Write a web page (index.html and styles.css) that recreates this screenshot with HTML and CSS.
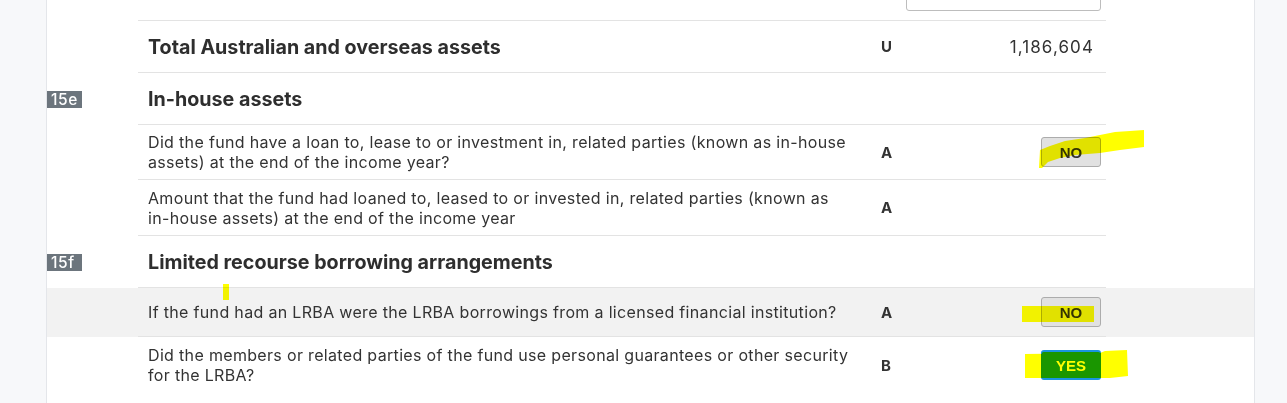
FILE: index.html
```html
<!DOCTYPE html>
<html lang="en">
<head>
<meta charset="utf-8">
<title>In-house assets</title>
<link rel="stylesheet" href="styles.css">
</head>
<body>
<div class="page">
  <aside class="side side-left"></aside>
  <main class="main">
    <div class="row row-partial">
      <div class="gutter"></div>
      <div class="cells">
        <div class="desc"></div>
        <div class="letter"></div>
        <div class="value"><div class="input-stub"></div></div>
      </div>
    </div>

    <div class="row row-heading">
      <div class="gutter"></div>
      <div class="cells">
        <div class="desc heading">Total Australian and overseas assets</div>
        <div class="letter">U</div>
        <div class="value"><span class="amount">1,186,604</span></div>
      </div>
    </div>

    <div class="row row-heading">
      <div class="gutter"><span class="badge">15e</span></div>
      <div class="cells">
        <div class="desc heading">In-house assets</div>
        <div class="letter"></div>
        <div class="value"></div>
      </div>
    </div>

    <div class="row row-question">
      <div class="gutter"></div>
      <div class="cells">
        <div class="desc">Did the fund have a loan to, lease to or investment in, related parties (known as <span class="nowrap">in-house</span> assets) at the end of the income year?</div>
        <div class="letter">A</div>
        <div class="value"><button class="toggle toggle-no">NO</button></div>
      </div>
    </div>

    <div class="row row-question row-tall">
      <div class="gutter"></div>
      <div class="cells">
        <div class="desc">Amount that the fund had loaned to, leased to or invested in, related parties (known as <span class="nowrap">in-house</span> assets) at the end of the income year</div>
        <div class="letter">A</div>
        <div class="value"></div>
      </div>
    </div>

    <div class="row row-heading">
      <div class="gutter"><span class="badge">15f</span></div>
      <div class="cells">
        <div class="desc heading">Limited recourse borrowing arrangements</div>
        <div class="letter"></div>
        <div class="value"></div>
      </div>
    </div>

    <div class="row row-single row-shaded">
      <div class="gutter"></div>
      <div class="cells">
        <div class="desc">If the fund had an LRBA were the LRBA borrowings from a licensed financial institution?</div>
        <div class="letter">A</div>
        <div class="value"><button class="toggle toggle-no">NO</button></div>
      </div>
    </div>

    <div class="row row-question row-last">
      <div class="gutter"></div>
      <div class="cells">
        <div class="desc">Did the members or related parties of the fund use personal guarantees or other security for the LRBA?</div>
        <div class="letter">B</div>
        <div class="value"><button class="toggle toggle-yes">YES</button></div>
      </div>
    </div>
  </main>
  <aside class="side side-right"></aside>

  <svg class="highlights" width="1287" height="403" viewBox="0 0 1287 403" aria-hidden="true">
    <polygon points="1039,168 1040,150 1050,146 1065,141 1085,138 1100,135 1115,132 1130,131 1144,130 1144,147 1120,150 1100,153 1075,155 1060,158 1048,162 1042,168"/>
    <rect x="223" y="284" width="6" height="16"/>
    <rect x="1022" y="306" width="72" height="16"/>
    <polygon points="1025,354 1100,353 1105,351 1127,350 1128,376 1110,378 1025,378"/>
  </svg>
</div>
</body>
</html>
```

FILE: styles.css
```css
* { box-sizing: border-box; }

html, body {
  margin: 0;
  padding: 0;
  background: #ffffff;
}

body {
  font-family: Inter, "Noto Sans", "Liberation Sans", sans-serif;
  color: #333333;
  font-size: 16px;
  overflow: hidden;
}

.page {
  position: relative;
  display: flex;
  width: 1287px;
  height: 403px;
  overflow: hidden;
}

.side {
  background: #f7f8fa;
  flex: none;
}

.side-left {
  width: 47px;
  border-right: 1px solid #e4e6ea;
}

.side-right {
  flex: 1;
  border-left: 1px solid #e4e6ea;
}

.main {
  width: 1207px;
  flex: none;
  background: #ffffff;
  display: flex;
  flex-direction: column;
}

.row {
  display: flex;
}

.row-shaded {
  background: #f2f2f2;
}

.gutter {
  width: 91px;
  flex: none;
  display: flex;
  align-items: center;
}

.badge {
  display: inline-block;
  background: #6c757d;
  color: #ffffff;
  font-size: 15.5px;
  font-weight: 500;
  line-height: 17px;
  height: 17px;
  width: 35px;
  padding-left: 4px;
  letter-spacing: 0.6px;
}

.cells {
  width: 968px;
  flex: none;
  display: grid;
  grid-template-columns: 733px 30px 205px;
  align-items: center;
  border-bottom: 1px solid #e3e3e3;
}

.desc {
  padding-left: 10px;
  line-height: 20px;
  font-size: 16px;
  letter-spacing: 0.33px;
  padding-right: 12px;
}

.nowrap {
  white-space: nowrap;
}

.heading {
  font-size: 19.7px;
  font-weight: 700;
  letter-spacing: 0;
  color: #2e2e2e;
}

.letter {
  padding-left: 10px;
  font-size: 15px;
  font-weight: 700;
  color: #333333;
}

.value {
  display: flex;
  justify-content: flex-end;
  padding-right: 5px;
  padding-left: 5px;
}

.amount {
  padding-right: 7px;
  font-size: 17px;
  letter-spacing: 1.1px;
  color: #333333;
}

.row-partial .cells {
  height: 21px;
  overflow: hidden;
  align-items: start;
}

.input-stub {
  width: 195px;
  height: 30px;
  margin-top: -19px;
  border: 1px solid #bdbdbd;
  border-radius: 3px;
  background: #ffffff;
}

.row-heading .cells {
  height: 52px;
}

.row-question .cells {
  min-height: 55px;
  padding: 7px 0 7px;
}

.row-tall .cells {
  min-height: 56px;
}

.row-single .cells {
  height: 49px;
}

.row-last .cells {
  border-bottom: none;
  padding-top: 8px;
}

.toggle {
  width: 60px;
  height: 30px;
  font-family: "Liberation Sans", Arial, sans-serif;
  font-weight: 700;
  font-size: 15px;
  border-radius: 3px;
  padding: 0;
  margin: 0;
  cursor: pointer;
}

.toggle-no {
  background: #e1e1e1;
  border: 1px solid #acacac;
  color: #333333;
}

.toggle-yes {
  background: #1a9600;
  border: 2px solid #1a94e0;
  border-left-width: 1px;
  border-right-width: 1px;
  color: #ffffff;
}

.highlights {
  position: absolute;
  left: 0;
  top: 0;
  pointer-events: none;
  mix-blend-mode: multiply;
  fill: #ffff00;
}
```
